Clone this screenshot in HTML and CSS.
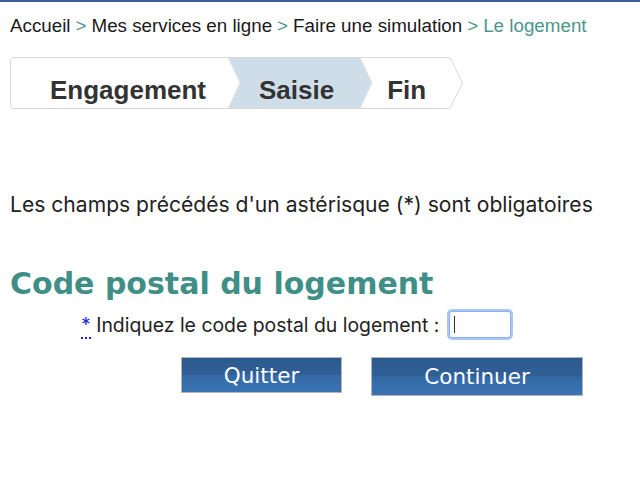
FILE: index.html
```html
<!DOCTYPE html>
<html lang="fr">
<head>
<meta charset="utf-8">
<title>Code postal du logement</title>
<link rel="stylesheet" href="styles.css">
</head>
<body>
<div class="page">
  <nav class="crumbs">
    <span>Accueil</span><span class="sep">&gt;</span><span>Mes services en ligne</span><span class="sep">&gt;</span><span>Faire une simulation</span><span class="sep">&gt;</span><span class="current">Le logement</span>
  </nav>

  <div class="steps">
    <svg class="steps-bg" width="454" height="53" viewBox="0 0 454 53" aria-hidden="true">
      <polygon points="218,0.5 350,0.5 362,26 350,51.5 218,51.5 230,26" fill="#cfdde9"/>
      <path d="M3.5,0.5 H440 L452.5,26 L440,51.5 H3.5 A3,3 0 0 1 0.5,48.5 V3.5 A3,3 0 0 1 3.5,0.5 Z" fill="none" stroke="#d9d9d9" stroke-width="1"/>
      <polyline points="218,0.5 230,26 218,51.5" fill="none" stroke="#e4e4e4" stroke-width="1"/>
      <polyline points="350,0.5 362,26 350,51.5" fill="none" stroke="#e4e4e4" stroke-width="1"/>
    </svg>
    <span class="step">Engagement</span>
    <span class="step">Saisie</span>
    <span class="step">Fin</span>
  </div>

  <p class="notice">Les champs précédés d'un astérisque (*) sont obligatoires</p>

  <h1 class="title">Code postal du logement</h1>

  <div class="field-row">
    <label class="field-label" for="cp"><abbr class="req" title="obligatoire">*</abbr> Indiquez le code postal du logement :</label>
    <span class="input-wrap"><input class="input" id="cp" type="text"><span class="caret"></span></span>
  </div>

  <div class="actions">
    <button class="btn btn-quit" type="button">Quitter</button>
    <button class="btn btn-next" type="button">Continuer</button>
  </div>
</div>
</body>
</html>
```

FILE: styles.css
```css
html, body {
  margin: 0;
  padding: 0;
  background: #fff;
}
body {
  border-top: 2px solid #3b5e9e;
  font-family: "Liberation Sans", Arial, sans-serif;
  color: #222;
}
.page {
  padding: 13px 10px 0 10px;
}
.crumbs {
  font-size: 18.8px;
  line-height: 22px;
  color: #1a1a1a;
  white-space: nowrap;
}
.crumbs .sep {
  color: #4a968d;
  margin: 0 5px;
}
.crumbs .current {
  color: #4a968d;
}
.steps {
  position: relative;
  margin-top: 20px;
  width: 454px;
  height: 53px;
  display: flex;
  gap: 53px;
  padding-left: 40px;
  box-sizing: border-box;
}
.steps-bg {
  position: absolute;
  left: 0;
  top: 0;
}
.step {
  position: relative;
  font-weight: bold;
  font-size: 26px;
  line-height: 30px;
  padding-top: 18px;
  color: #333;
}
.notice {
  margin: 83px 0 0 0;
  font-family: Inter, "Liberation Sans", sans-serif;
  font-size: 21.1px;
  line-height: 24px;
  color: #222;
}
.title {
  margin: 49px 0 0 0;
  font-family: "DejaVu Sans", Verdana, sans-serif;
  font-weight: bold;
  font-size: 30px;
  line-height: 36px;
  color: #3f8f86;
}
.field-row {
  margin: 7px 0 0 71px;
  display: flex;
  align-items: center;
  gap: 8px;
  height: 31px;
}
.field-label {
  font-family: Inter, "Liberation Sans", sans-serif;
  font-size: 19.4px;
  color: #222;
}
.req {
  color: #1f1fe6;
  text-decoration: none;
  border-bottom: 2px dotted #1f1fe6;
}
.input-wrap {
  position: relative;
  display: inline-block;
}
.input {
  display: block;
  width: 62px;
  height: 27px;
  box-sizing: border-box;
  border: 1px solid #8fb1e8;
  border-radius: 3px;
  box-shadow: 0 0 0 2px #a9c6f5;
  margin: 2px;
  outline: none;
  padding: 0;
}
.caret {
  position: absolute;
  left: 7px;
  top: 7px;
  width: 1px;
  height: 17px;
  background: #333;
}
.actions {
  margin: 17px 0 0 171px;
  display: flex;
  align-items: flex-start;
  gap: 29px;
}
.btn {
  font-family: "DejaVu Sans", Verdana, sans-serif;
  font-size: 21.5px;
  color: #fff;
  border: 1px solid #b4b4b4;
  background: linear-gradient(#2d5a8d 0%, #305f97 48%, #3369a6 52%, #3a74b3 100%);
  padding: 0;
  cursor: pointer;
}
.btn-quit {
  width: 161px;
  height: 36px;
}
.btn-next {
  width: 212px;
  height: 39px;
}
```
